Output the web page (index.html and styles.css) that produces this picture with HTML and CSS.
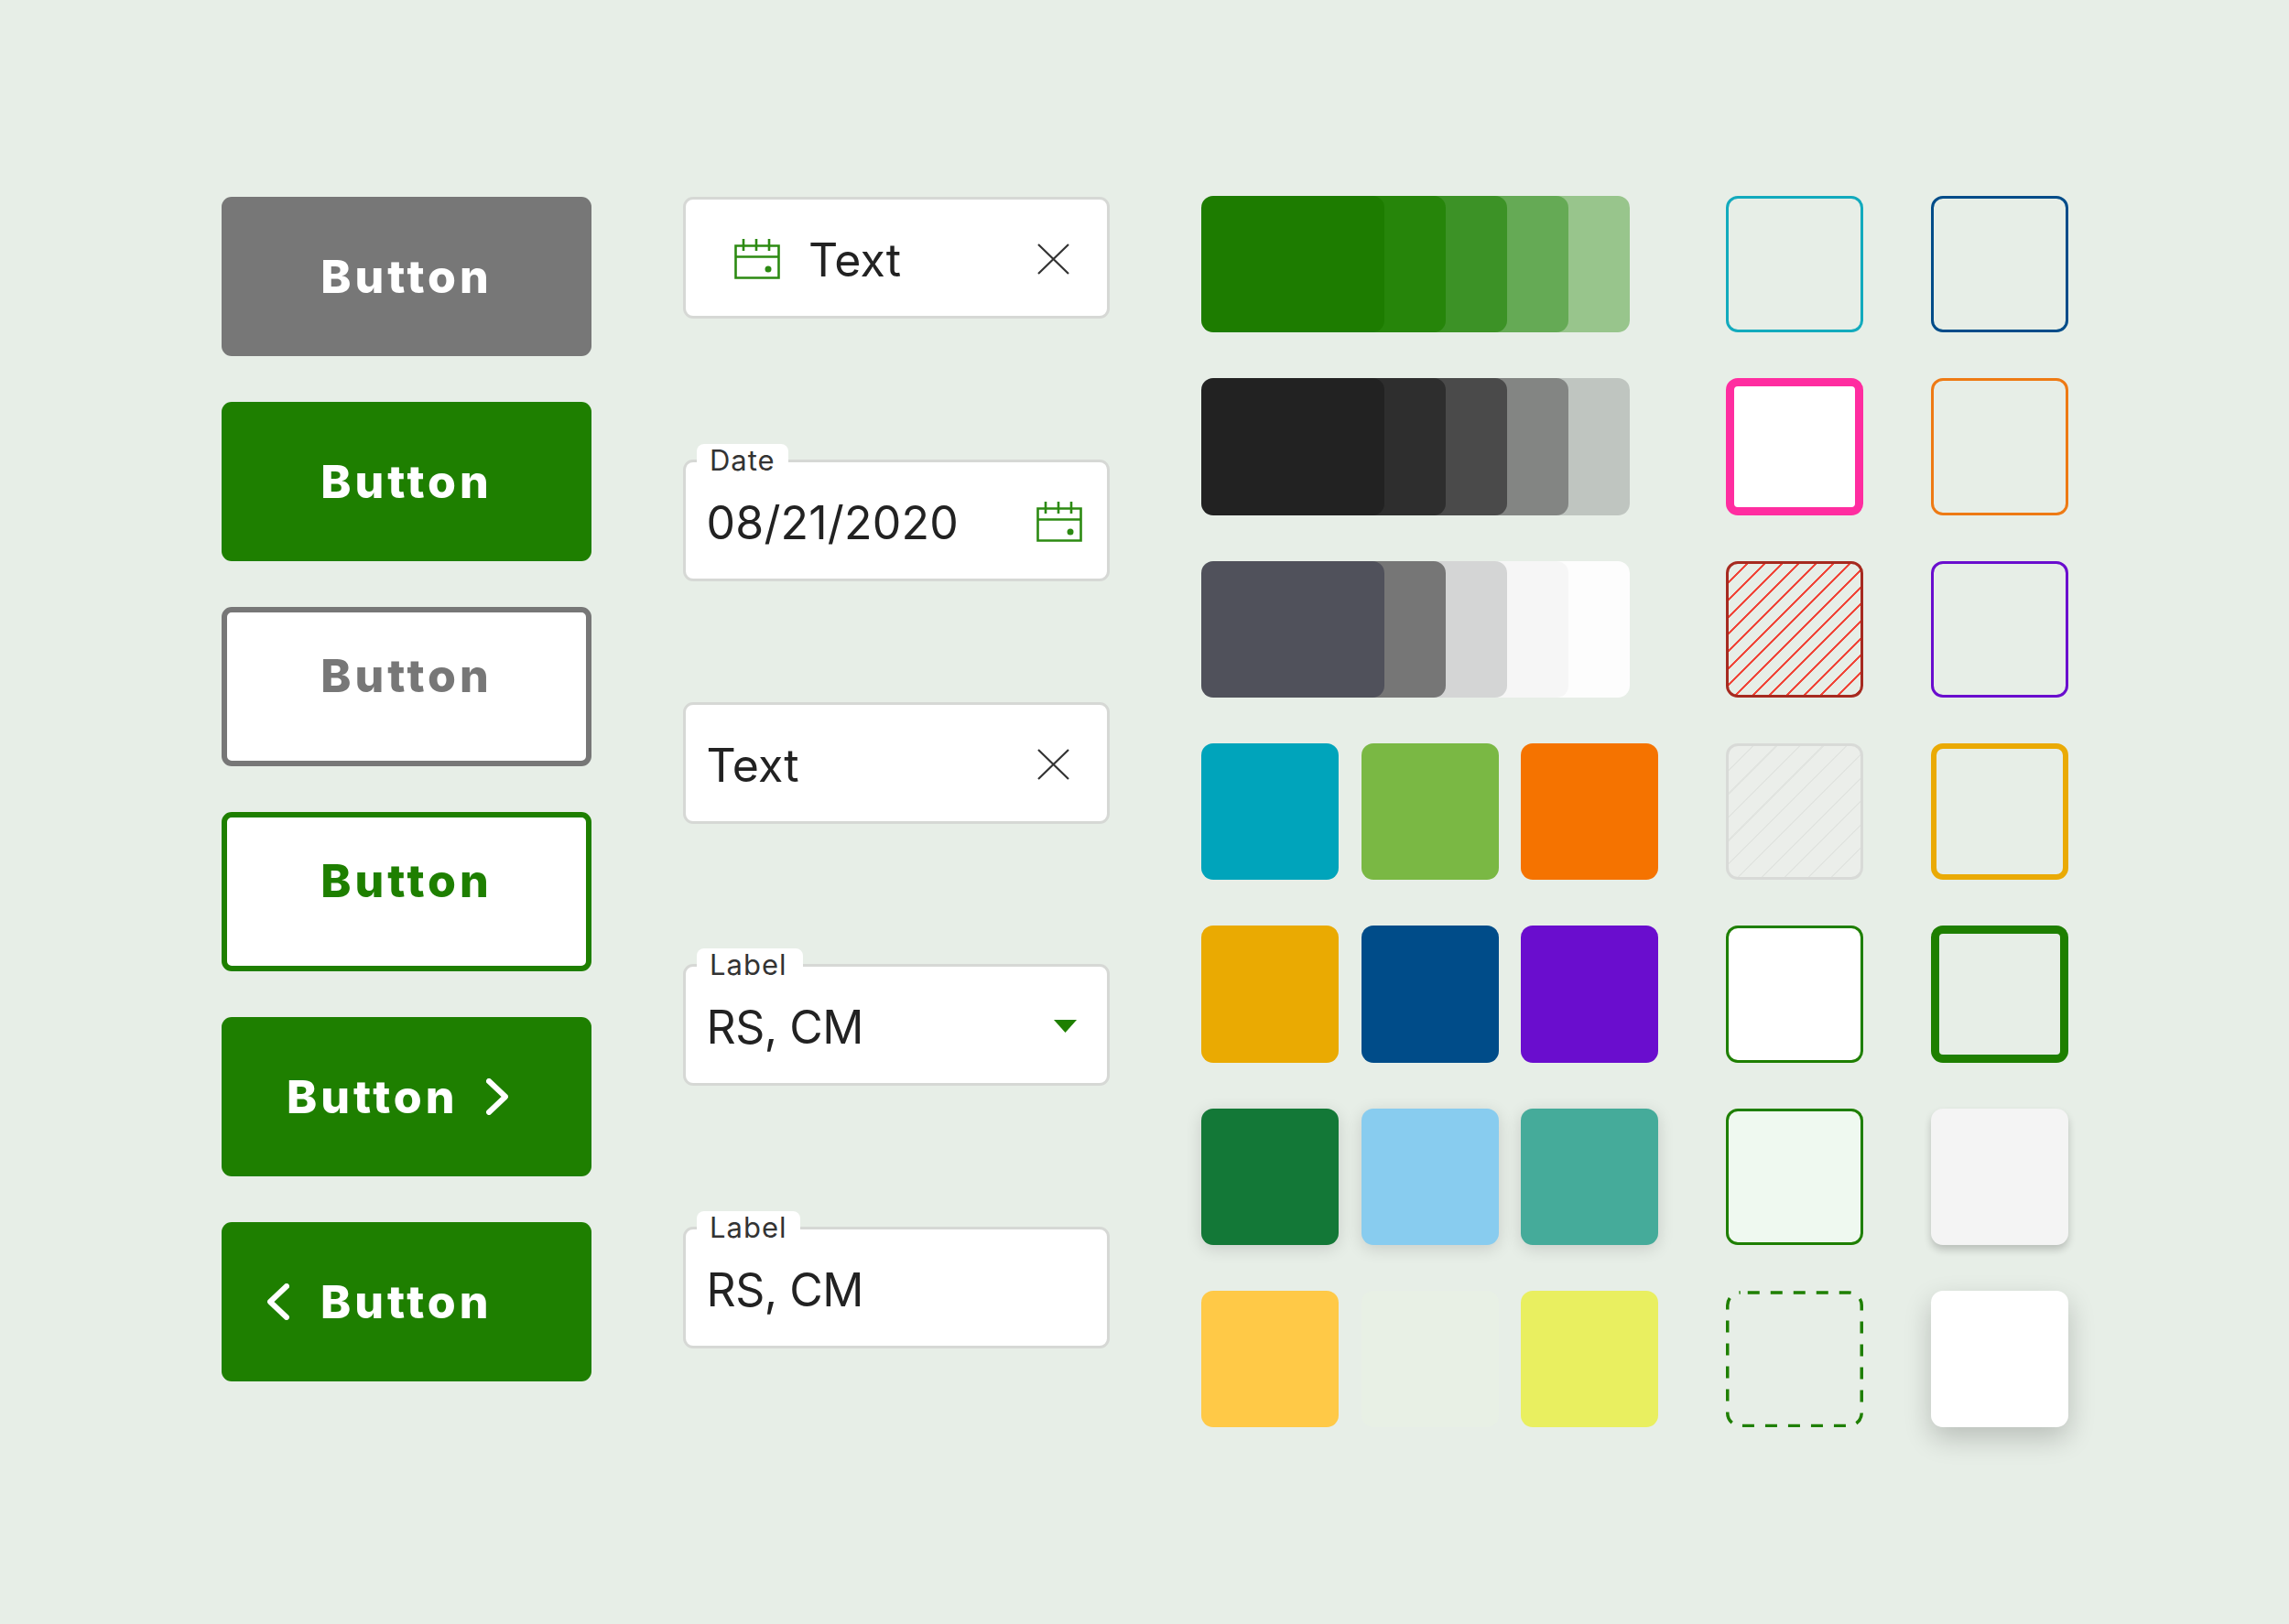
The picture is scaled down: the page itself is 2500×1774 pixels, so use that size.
FILE: index.html
```html
<!DOCTYPE html>
<html lang="en">
<head>
<meta charset="utf-8">
<title>UI kit</title>
<link rel="stylesheet" href="styles.css">
</head>
<body>
<main class="board">
  <section class="buttons">
    <div class="btn btn--grey">Button</div>
    <div class="btn btn--green">Button</div>
    <div class="btn btn--outline-grey">Button</div>
    <div class="btn btn--outline-green">Button</div>
    <div class="btn btn--green btn--next">Button
      <svg class="chevron" viewBox="0 0 24 40"><path d="M3 3 L21 20 L3 37"/></svg>
    </div>
    <div class="btn btn--green btn--prev">
      <svg class="chevron" viewBox="0 0 24 40"><path d="M21 3 L3 20 L21 37"/></svg>
      Button
    </div>
  </section>

  <section class="fields">
    <div class="field field--leading">
      <svg class="cal cal--leading" viewBox="0 0 50 44"><path d="M1.5 7.5H48.5V42.5H1.5ZM1.5 19.5H48.5M10 0V13M24 0V13M38 0V13"/><circle cx="37" cy="33" r="3.5"/></svg>
      <span class="value">Text</span>
      <svg class="close" viewBox="0 0 35 34"><path d="M1 1L34 33M34 1L1 33"/></svg>
    </div>
    <div class="field field--labelled">
      <span class="tab">Date</span>
      <span class="value value--date">08/21/2020</span>
      <svg class="cal cal--trailing" viewBox="0 0 50 44"><path d="M1.5 7.5H48.5V42.5H1.5ZM1.5 19.5H48.5M10 0V13M24 0V13M38 0V13"/><circle cx="37" cy="33" r="3.5"/></svg>
    </div>
    <div class="field">
      <span class="value">Text</span>
      <svg class="close" viewBox="0 0 35 34"><path d="M1 1L34 33M34 1L1 33"/></svg>
    </div>
    <div class="field field--labelled">
      <span class="tab tab--wide">Label</span>
      <span class="value value--code">RS, CM</span>
      <svg class="caret" viewBox="0 0 25 14"><path d="M0 0H25L12.5 14Z"/></svg>
    </div>
    <div class="field field--labelled">
      <span class="tab">Label</span>
      <span class="value value--code">RS, CM</span>
    </div>
  </section>

  <section class="palette">
    <div class="stack">
      <i class="band band--first g1"></i><i class="band g2"></i><i class="band g3"></i><i class="band g4"></i><i class="band g5"></i>
    </div>
    <div class="stack">
      <i class="band band--first k1"></i><i class="band k2"></i><i class="band k3"></i><i class="band k4"></i><i class="band k5"></i>
    </div>
    <div class="stack">
      <i class="band band--first n1"></i><i class="band n2"></i><i class="band n3"></i><i class="band n4"></i><i class="band n5"></i>
    </div>
    <div class="chips">
      <i class="chip c-cyan"></i><i class="chip c-lime"></i><i class="chip c-orange"></i>
    </div>
    <div class="chips">
      <i class="chip c-amber"></i><i class="chip c-navy"></i><i class="chip c-purple"></i>
    </div>
    <div class="chips">
      <i class="chip chip--raised c-forest"></i><i class="chip chip--raised c-sky"></i><i class="chip chip--raised c-teal"></i>
    </div>
    <div class="chips">
      <i class="chip c-sun"></i><i class="chip c-mist"></i><i class="chip c-lemon"></i>
    </div>
  </section>

  <section class="boxes boxes--a">
    <i class="box b-cyan"></i>
    <i class="box b-pink"></i>
    <i class="box b-error"></i>
    <i class="box b-disabled"></i>
    <i class="box b-white"></i>
    <i class="box b-mint"></i>
    <div class="box b-dashed"><svg class="dash" viewBox="0 0 150 149"><rect x="1.75" y="1.75" width="146.5" height="145.5" rx="14"/></svg></div>
  </section>

  <section class="boxes">
    <i class="box b-navy"></i>
    <i class="box b-orange"></i>
    <i class="box b-purple"></i>
    <i class="box b-amber"></i>
    <i class="box b-thick"></i>
    <i class="box b-card"></i>
    <i class="box b-float"></i>
  </section>
</main>
</body>
</html>
```
FILE: styles.css
```css
* { box-sizing: border-box; }
html, body { margin: 0; height: 100%; }
body {
  width: 2500px;
  height: 1774px;
  background: #e7eee7;
  font-family: Inter, "Liberation Sans", sans-serif;
  color: #222;
  overflow: hidden;
}
.board {
  display: flex;
  align-items: flex-start;
  padding: 214px 0 0 242px;
}

/* Buttons */
.buttons {
  display: flex;
  flex-direction: column;
  gap: 50px;
  width: 404px;
  margin-top: 1px;
}
.btn {
  display: flex;
  align-items: center;
  justify-content: center;
  height: 174px;
  border-radius: 11px;
  font-size: 50px;
  font-weight: 800;
  letter-spacing: 4px;
  color: #fff;
}
.btn--grey { background: #777; }
.btn--green { background: #1e7f00; }
.btn--outline-grey, .btn--outline-green {
  background: #fff;
  border: 6px solid;
  padding-bottom: 24px;
}
.btn--outline-grey { border-color: #777; color: #777; }
.btn--outline-green { border-color: #1e7f00; color: #1e7f00; }
.btn--next { justify-content: flex-start; gap: 31px; padding-left: 71px; }
.btn--prev { justify-content: flex-start; gap: 34px; padding-left: 50px; }
.chevron {
  width: 24px;
  height: 40px;
  fill: none;
  stroke: #fff;
  stroke-width: 6px;
  stroke-linecap: round;
  stroke-linejoin: round;
}

/* Inputs */
.fields {
  display: flex;
  flex-direction: column;
  width: 466px;
  margin: 1px 0 0 100px;
}
.field {
  position: relative;
  display: flex;
  align-items: center;
  height: 133px;
  margin-top: 132px;
  padding: 3px 0 0 22.5px;
  background: #fff;
  border: 3px solid #d6d8d5;
  border-radius: 11px;
  font-size: 50px;
}
.field--leading { margin-top: 0; padding-left: 53px; }
.field--labelled { margin-top: 153.5px; }
.value { position: relative; top: 1px; }
.value--date { letter-spacing: .2px; }
.value--code { letter-spacing: -.5px; }
.tab {
  position: absolute;
  left: 12px;
  top: -20px;
  padding: 1px 14px 0;
  height: 40px;
  background: #fff;
  border-radius: 8px 8px 0 0;
  font-size: 31px;
  line-height: 34px;
  letter-spacing: 1px;
  color: #333;
}
.tab--wide { padding-right: 17px; }
.cal {
  width: 50px;
  height: 44px;
  flex: none;
  fill: none;
  stroke: #2c8a12;
  stroke-width: 2.6px;
}
.cal circle { fill: #2c8a12; stroke: none; }
.cal--leading { margin-right: 31px; }
.cal--trailing { margin-left: auto; margin-right: 27px; }
.close {
  width: 35px;
  height: 34px;
  margin-left: auto;
  margin-right: 41px;
  fill: none;
  stroke: #333;
  stroke-width: 2.2px;
}
.caret {
  width: 25px;
  height: 14px;
  margin-left: auto;
  margin-right: 33px;
  fill: #1e7f00;
}

/* Palette */
.palette {
  display: flex;
  flex-direction: column;
  gap: 50px;
  width: 499px;
  margin-left: 100px;
}
.stack, .chips { display: flex; height: 149.33px; }
.chips { justify-content: space-between; }
.band {
  display: block;
  width: 97px;
  margin-left: -30px;
  border-radius: 13px;
}
.band--first { width: 200px; margin-left: 0; z-index: 5; }
.band:nth-child(2) { z-index: 4; }
.band:nth-child(3) { z-index: 3; }
.band:nth-child(4) { z-index: 2; }
.band:nth-child(5) { z-index: 1; }
.g1 { background: #1d7c00; }
.g2 { background: #26850a; }
.g3 { background: #3c9226; }
.g4 { background: #65aa55; }
.g5 { background: #98c58c; }
.k1 { background: #222; }
.k2 { background: #2e2e2e; }
.k3 { background: #4a4a4a; }
.k4 { background: #838583; }
.k5 { background: #bfc5c0; }
.n1 { background: #50515b; }
.n2 { background: #767676; }
.n3 { background: #d4d5d5; }
.n4 { background: #f6f6f6; }
.n5 { background: #fdfdfd; }

.chip {
  display: block;
  width: 150px;
  border-radius: 13px;
}
.chip--raised { box-shadow: 0 4px 18px rgba(0, 0, 0, .14); }
.c-cyan { background: #00a4bb; }
.c-lime { background: #7ab844; }
.c-orange { background: #f57300; }
.c-amber { background: #eaaa02; }
.c-navy { background: #004c89; }
.c-purple { background: #6a0dce; }
.c-forest { background: #137837; }
.c-sky { background: #88ccef; }
.c-teal { background: #45ab9a; }
.c-sun { background: #ffc947; }
.c-mist { background: #e8f0e5; }
.c-lemon { background: #e9ef60; }

/* Outlined boxes */
.boxes {
  display: flex;
  flex-direction: column;
  gap: 50px;
  width: 150px;
  margin-left: 74px;
}
.box {
  display: block;
  height: 149.33px;
  border: 3px solid transparent;
  border-radius: 13px;
}
.b-cyan { border-color: #12aabd; }
.b-navy { border-color: #004c89; }
.b-pink { border: 9px solid #ff2da0; background: #fff; }
.b-orange { border-color: #ee7a14; }
.b-error {
  border-color: #a62a20;
  background: repeating-linear-gradient(135deg, #f0473a 0 2.2px, transparent 2.2px 13.2px);
}
.b-purple { border-color: #6a0dce; }
.b-disabled {
  border-color: #d8dad7;
  background: repeating-linear-gradient(135deg, #e1e4e0 0 1.6px, #ebeeea 1.6px 18px);
}
.b-amber { border: 6px solid #eaaa05; }
.b-white { border-color: #1e7f00; background: #fff; }
.b-thick { border: 9px solid #1e7f00; }
.b-mint { border-color: #1e7f00; background: #eff9f0; }
.b-card { background: #f4f4f4; box-shadow: 0 5px 8px rgba(0, 0, 0, .2); }
.b-dashed { border: 0; }
.dash {
  display: block;
  width: 100%;
  height: 100%;
  fill: none;
  stroke: #1e7f00;
  stroke-width: 3.5px;
  stroke-dasharray: 13 12;
  stroke-dashoffset: -8;
}
.b-float { background: #fff; box-shadow: 0 12px 30px rgba(0, 0, 0, .2); }
```
